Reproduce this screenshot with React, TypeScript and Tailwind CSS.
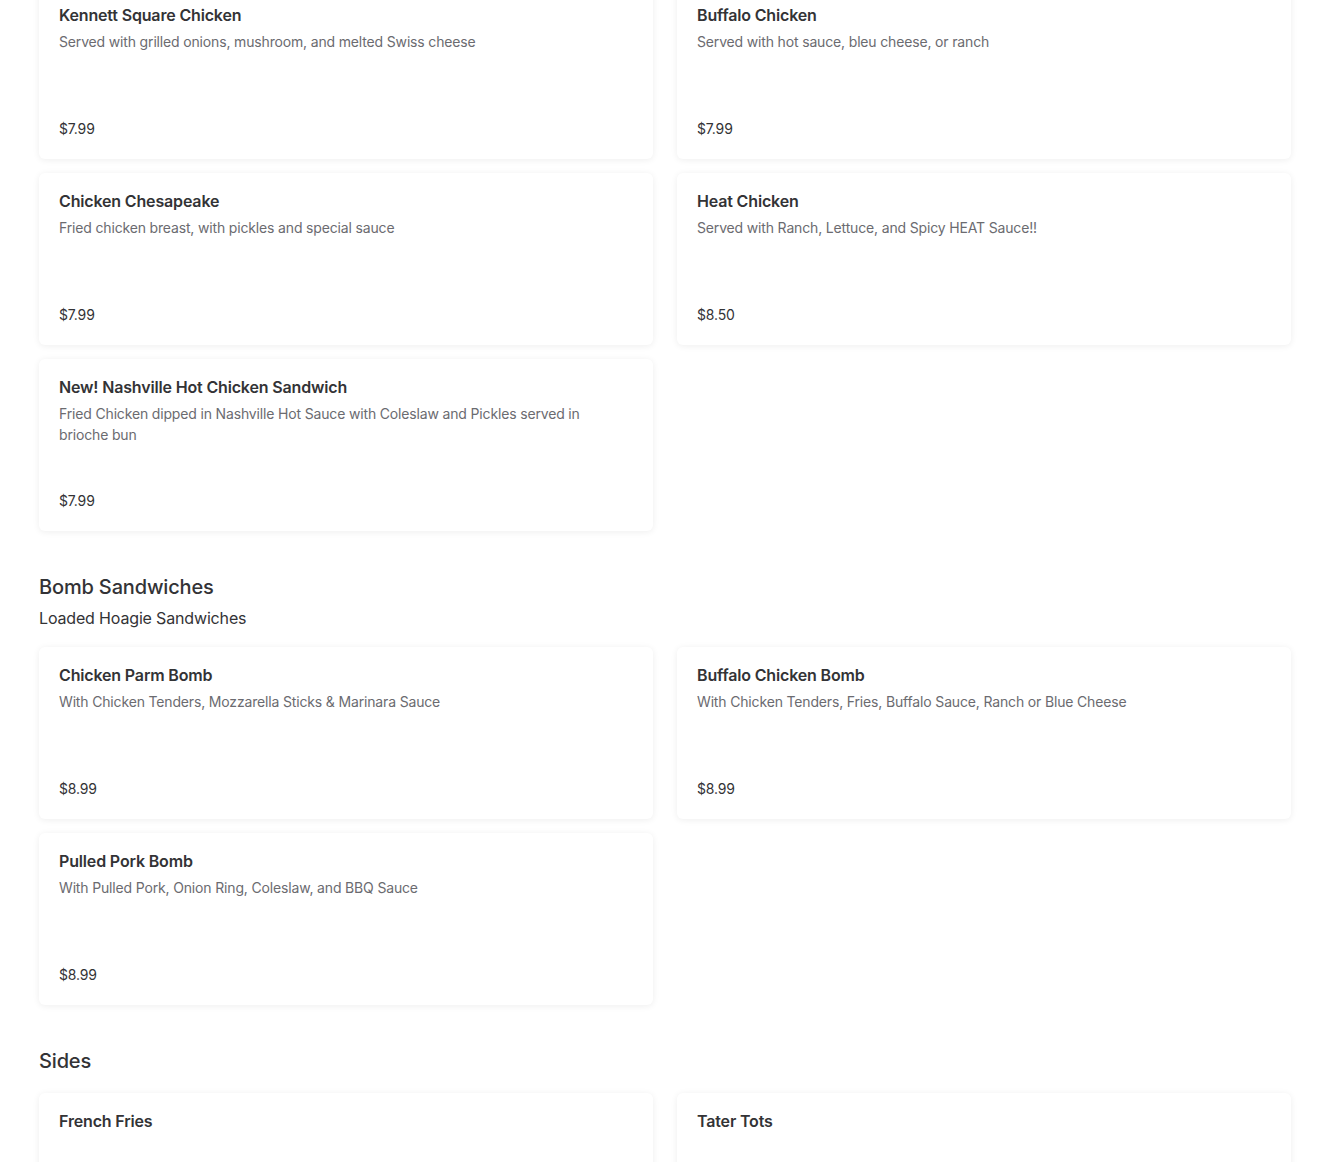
import React from "react";

interface IItem {
    name: string;
    description?: string;
    price?: string;
}

interface ISection {
    title?: string;
    subtitle?: string;
    items: IItem[];
}

const sections: ISection[] = [
    {
        items: [
            { name: "Kennett Square Chicken", description: "Served with grilled onions, mushroom, and melted Swiss cheese", price: "$7.99" },
            { name: "Buffalo Chicken", description: "Served with hot sauce, bleu cheese, or ranch", price: "$7.99" },
            { name: "Chicken Chesapeake", description: "Fried chicken breast, with pickles and special sauce", price: "$7.99" },
            { name: "Heat Chicken", description: "Served with Ranch, Lettuce, and Spicy HEAT Sauce!!", price: "$8.50" },
            { name: "New! Nashville Hot Chicken Sandwich", description: "Fried Chicken dipped in Nashville Hot Sauce with Coleslaw and Pickles served in brioche bun", price: "$7.99" },
        ],
    },
    {
        title: "Bomb Sandwiches",
        subtitle: "Loaded Hoagie Sandwiches",
        items: [
            { name: "Chicken Parm Bomb", description: "With Chicken Tenders, Mozzarella Sticks & Marinara Sauce", price: "$8.99" },
            { name: "Buffalo Chicken Bomb", description: "With Chicken Tenders, Fries, Buffalo Sauce, Ranch or Blue Cheese", price: "$8.99" },
            { name: "Pulled Pork Bomb", description: "With Pulled Pork, Onion Ring, Coleslaw, and BBQ Sauce", price: "$8.99" },
        ],
    },
    {
        title: "Sides",
        items: [{ name: "French Fries" }, { name: "Tater Tots" }],
    },
];

const MenuCard = ({ item }: { item: IItem }) => (
    <div className="flex h-[172px] flex-col justify-between rounded-md bg-white px-5 pt-4 pb-5 shadow-[0_1px_7px_rgba(0,0,0,0.07)]">
        <div>
            <h3 className="text-[16px] leading-6 font-semibold text-[#333336]">{item.name}</h3>
            {item.description && (
                <p className="mt-1 pr-8 text-[14px] leading-[21px] text-[#6b6b70]">{item.description}</p>
            )}
        </div>
        {item.price && <p className="text-[14px] leading-[21px] text-[#333336]">{item.price}</p>}
    </div>
);

const App = () => {
    return (
        <div className="min-h-screen bg-white px-[39px] font-['Inter',sans-serif] tracking-[-0.01em]">
            <div className="-mt-[13px]">
                {sections.map((section, i) => (
                    <section key={i} className={i > 0 ? "mt-[42px]" : ""}>
                        {section.title && (
                            <h2 className="text-[20px] leading-7 font-medium text-[#333336]">{section.title}</h2>
                        )}
                        {section.subtitle && (
                            <p className="mt-[5px] text-[16px] leading-6 text-[#333336]">{section.subtitle}</p>
                        )}
                        <div className={`grid grid-cols-2 gap-x-6 gap-y-[14px] ${section.subtitle ? "mt-[17px]" : section.title ? "mt-[18px]" : ""}`}>
                            {section.items.map((item) => (
                                <MenuCard key={item.name} item={item} />
                            ))}
                        </div>
                    </section>
                ))}
            </div>
        </div>
    );
};

export default App;
